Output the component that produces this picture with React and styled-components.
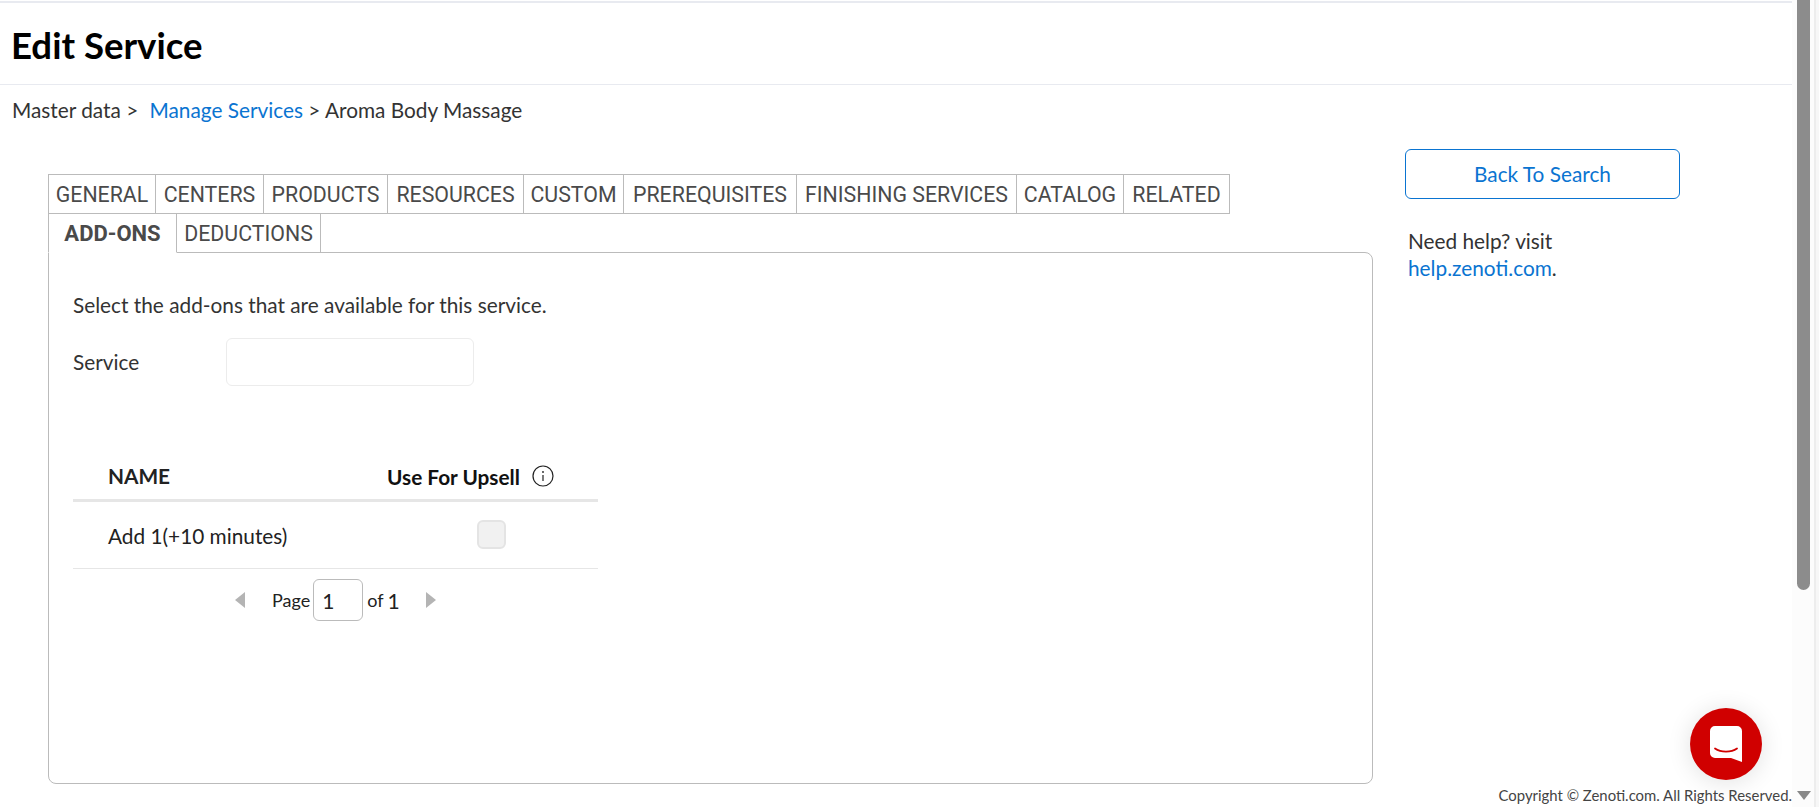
import styled, { createGlobalStyle } from "styled-components";

const GlobalStyle = createGlobalStyle`
  html, body {
    margin: 0;
    padding: 0;
    height: 100%;
    overflow: hidden;
    background: #fff;
  }
  * {
    box-sizing: border-box;
  }
`;

const Page = styled.div`
  position: relative;
  width: 1819px;
  height: 807px;
  overflow: hidden;
  font-family: Lato, "Open Sans", sans-serif;
  color: #333;
  padding-top: 1px;
`;

const Content = styled.div`
  width: 1792px;
`;

const Header = styled.header`
  height: 84px;
  border-top: 2px solid #e8eaf0;
  border-bottom: 1px solid #e8eaf0;
  padding: 20px 0 0 11px;

  h1 {
    margin: 0;
    font-size: 36.6px;
    line-height: 44px;
    font-weight: 700;
    color: #000;
  }
`;

const Breadcrumb = styled.div`
  padding: 11px 0 0 12px;
  height: 64px;
  font-size: 20.8px;
  line-height: 27px;

  a {
    color: #0a74d1;
    text-decoration: none;
    margin-left: 6px;
  }
`;

const Main = styled.div`
  display: flex;
  align-items: flex-start;
  padding-left: 48px;
`;

const Editor = styled.div`
  width: 1325px;
  margin-top: 25px;
`;

const TabRow = styled.div`
  display: flex;
  height: ${(p) => (p.$first ? "40px" : "38px")};
`;

const Tab = styled.div`
  width: ${(p) => p.$width}px;
  height: ${(p) => (p.$first ? "40px" : "39px")};
  display: flex;
  align-items: center;
  justify-content: center;
  white-space: nowrap;
  font-family: Roboto, sans-serif;
  font-size: ${(p) => (p.$active ? "22px" : "21.33px")};
  font-weight: ${(p) => (p.$active ? 700 : 400)};
  color: #4a4a4a;
  background: #fff;
  border: 1px solid #bbb;
  border-left-width: ${(p) => (p.$start ? "1px" : "0")};
  border-bottom-color: ${(p) => (p.$active ? "#fff" : "#bbb")};
  border-top-width: ${(p) => (p.$first ? "1px" : "0")};
  position: relative;
  z-index: 1;
`;

const Panel = styled.section`
  height: 532px;
  border: 1px solid #bbb;
  border-radius: 0 8px 8px 8px;
  padding: 38px 24px 0;
`;

const Intro = styled.p`
  margin: 0;
  font-size: 20.8px;
  line-height: 27px;
`;

const FieldRow = styled.div`
  display: flex;
  align-items: center;
  margin-top: 20px;
  height: 48px;

  label {
    width: 153px;
    font-size: 20.8px;
    margin-top: -2px;
  }
`;

const TextInput = styled.div`
  width: 248px;
  height: 48px;
  border: 1px solid #ececec;
  border-radius: 6px;
  background: #fff;
`;

const Table = styled.div`
  width: 525px;
  margin-top: 62px;
`;

const HeadRow = styled.div`
  display: flex;
  align-items: center;
  height: 54px;
  border-bottom: 3px solid #e6e6e6;
  padding: 3px 0 0 35px;
  font-size: 20.8px;
  font-weight: 700;
  color: #111;
`;

const NameCell = styled.div`
  width: 279px;
  font-size: 20.8px;
  color: #222;
  font-weight: inherit;
`;

const UpsellHead = styled.div`
  display: flex;
  align-items: center;
  gap: 12px;
  margin-top: 2px;
`;

const BodyRow = styled.div`
  display: flex;
  align-items: center;
  height: 67px;
  border-bottom: 1px solid #e6e6e6;
  padding-left: 35px;
`;

const CheckBox = styled.div`
  width: 29px;
  height: 29px;
  margin: -1px 0 0 90px;
  background: #f1f1f1;
  border: 2px solid #e4e4e4;
  border-radius: 6px;
`;

const Pager = styled.div`
  display: flex;
  align-items: center;
  height: 62px;
  padding-left: 162px;
  font-size: 18px;
  color: #222;
`;

const PageInput = styled.div`
  width: 50px;
  height: 42px;
  margin: 0 4px 0 3px;
  padding-left: 8px;
  border: 1px solid #bbb;
  border-radius: 6px;
  display: flex;
  align-items: center;
  font-size: 21px;
`;

const PageTotal = styled.span`
  font-size: 21px;
  margin-left: 4px;
`;

const Arrow = styled.span`
  width: 0;
  height: 0;
  border-top: 8px solid transparent;
  border-bottom: 8px solid transparent;
  ${(p) =>
    p.$left
      ? "border-right: 10px solid #b4b4b4; margin-right: 27px;"
      : "border-left: 10px solid #b4b4b4; margin-left: 26px;"}
`;

const Side = styled.aside`
  margin-left: 32px;
  width: 275px;
`;

const BackButton = styled.button`
  display: block;
  width: 275px;
  height: 50px;
  padding: 0 0 2px;
  background: #fff;
  border: 1px solid #0a74d1;
  border-radius: 6px;
  font-family: inherit;
  font-size: 20.8px;
  color: #0a74d1;
`;

const HelpText = styled.p`
  margin: 28px 0 0 3px;
  font-size: 20.8px;
  line-height: 27px;

  a {
    color: #0a74d1;
    text-decoration: none;
  }
`;

const Copyright = styled.div`
  position: absolute;
  right: 8px;
  bottom: 0;
  display: flex;
  align-items: center;
  height: 24px;
  gap: 5px;
  font-size: 14.9px;
  color: #444;

  i {
    width: 0;
    height: 0;
    border-left: 7px solid transparent;
    border-right: 7px solid transparent;
    border-top: 9px solid #888;
  }
`;

const ChatButton = styled.button`
  position: absolute;
  left: 1690px;
  top: 708px;
  width: 72px;
  height: 72px;
  padding: 0;
  border: 0;
  border-radius: 50%;
  background: #d00000;
  box-shadow: 0 2px 24px rgba(0, 0, 0, 0.12);
  display: flex;
  align-items: center;
  justify-content: center;
`;

const ScrollTrack = styled.div`
  position: absolute;
  top: 0;
  right: 0;
  bottom: 0;
  width: 27px;
  background: #fcfcfc;

  &::after {
    content: "";
    position: absolute;
    top: 0;
    bottom: 0;
    left: 22px;
    right: 0;
    background: #f7f7f7;
    border-left: 2px solid #ededed;
  }
`;

const ScrollThumb = styled.div`
  position: absolute;
  top: 0;
  left: 5px;
  width: 13px;
  height: 590px;
  background: #8c8c8c;
  border-radius: 0 0 7px 7px;
`;

const tabsFirst = [
  { name: "GENERAL", width: 108 },
  { name: "CENTERS", width: 108 },
  { name: "PRODUCTS", width: 124 },
  { name: "RESOURCES", width: 136 },
  { name: "CUSTOM", width: 100 },
  { name: "PREREQUISITES", width: 173 },
  { name: "FINISHING SERVICES", width: 220 },
  { name: "CATALOG", width: 107 },
  { name: "RELATED", width: 106 },
];

export default function App() {
  return (
    <>
      <GlobalStyle />
      <Page>
        <Content>
          <Header>
            <h1>Edit Service</h1>
          </Header>
          <Breadcrumb>
            Master data &gt; <a href="#services">Manage Services</a> &gt; Aroma
            Body Massage
          </Breadcrumb>
          <Main>
            <Editor>
              <TabRow $first>
                {tabsFirst.map((tab, i) => (
                  <Tab key={tab.name} $first $start={i === 0} $width={tab.width}>
                    {tab.name}
                  </Tab>
                ))}
              </TabRow>
              <TabRow>
                <Tab $start $active $width={129}>
                  ADD-ONS
                </Tab>
                <Tab $width={144}>DEDUCTIONS</Tab>
              </TabRow>
              <Panel>
                <Intro>Select the add-ons that are available for this service.</Intro>
                <FieldRow>
                  <label>Service</label>
                  <TextInput />
                </FieldRow>
                <Table>
                  <HeadRow>
                    <NameCell>NAME</NameCell>
                    <UpsellHead>
                      Use For Upsell
                      <svg width="22" height="22" viewBox="0 0 22 22" fill="none">
                        <circle cx="11" cy="11" r="10" stroke="#222" strokeWidth="1.2" />
                        <path d="M11 10v6" stroke="#222" strokeWidth="1.2" />
                        <circle cx="11" cy="7" r="0.9" fill="#222" />
                      </svg>
                    </UpsellHead>
                  </HeadRow>
                  <BodyRow>
                    <NameCell>Add 1(+10 minutes)</NameCell>
                    <CheckBox />
                  </BodyRow>
                  <Pager>
                    <Arrow $left />
                    Page
                    <PageInput>1</PageInput>
                    of <PageTotal>1</PageTotal>
                    <Arrow />
                  </Pager>
                </Table>
              </Panel>
            </Editor>
            <Side>
              <BackButton>Back To Search</BackButton>
              <HelpText>
                Need help? visit
                <br />
                <a href="#help">help.zenoti.com</a>.
              </HelpText>
            </Side>
          </Main>
        </Content>
        <ScrollTrack>
          <ScrollThumb />
        </ScrollTrack>
        <ChatButton aria-label="Chat">
          <svg width="32" height="36" viewBox="0 0 32 36">
            <path
              d="M5 0h22a5 5 0 0 1 5 5v31l-11-4H5a5 5 0 0 1-5-5V5a5 5 0 0 1 5-5z"
              fill="#fff"
            />
            <path
              d="M5 22.500c6 4.200 16 4.200 22 0"
              fill="none"
              stroke="#d00000"
              strokeWidth="1.800"
              strokeLinecap="round"
            />
          </svg>
        </ChatButton>
        <Copyright>
          Copyright © Zenoti.com. All Rights Reserved.
          <i />
        </Copyright>
      </Page>
    </>
  );
}
